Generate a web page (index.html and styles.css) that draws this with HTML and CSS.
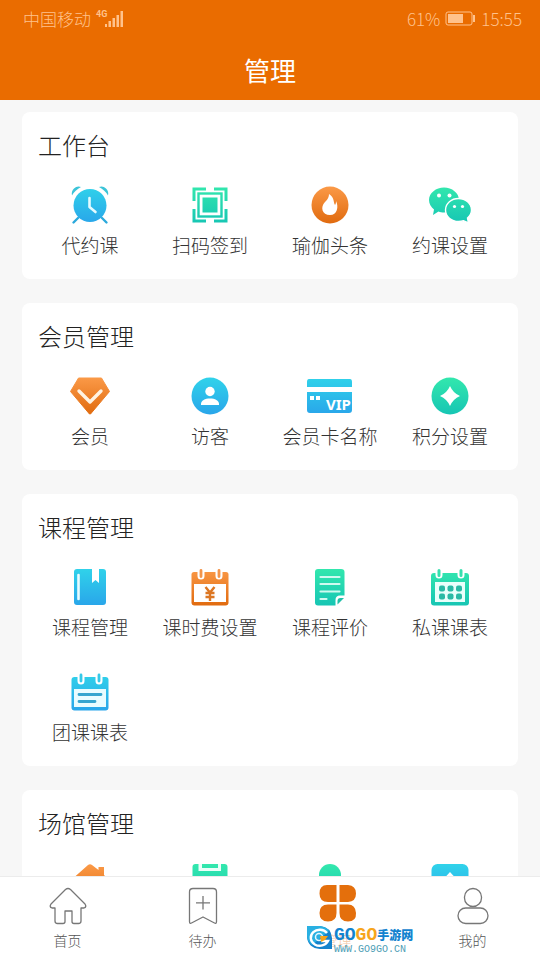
FILE: index.html
```html
<!DOCTYPE html>
<html lang="zh-CN">
<head>
<meta charset="utf-8">
<meta name="viewport" content="width=device-width, initial-scale=1">
<title>管理</title>
<link rel="stylesheet" href="styles.css">
</head>
<body>
<svg class="defs" aria-hidden="true">
  <defs>
    <linearGradient id="blue" gradientUnits="userSpaceOnUse" x1="0" y1="5" x2="0" y2="43"><stop offset="0" stop-color="#30d3ea"/><stop offset="1" stop-color="#29a5ea"/></linearGradient>
    <linearGradient id="green" gradientUnits="userSpaceOnUse" x1="0" y1="5" x2="0" y2="43"><stop offset="0" stop-color="#33e8ad"/><stop offset="1" stop-color="#16c5b4"/></linearGradient>
    <linearGradient id="orange" gradientUnits="userSpaceOnUse" x1="0" y1="5" x2="0" y2="43"><stop offset="0" stop-color="#fb9a48"/><stop offset="1" stop-color="#e06a0e"/></linearGradient>
  </defs>
</svg>

<header class="header">
  <div class="status">
    <div class="status-group">
      <span>中国移动</span>
      <span class="network">4G</span>
      <svg class="signal" viewBox="0 0 18 17" aria-hidden="true"><path d="M0 14h2v3H0zM3.500 11h2.500v6H3.500zM7.500 8H10v9H7.500zM11.500 5H14v12h-2.500zM15.500 1H18v16h-2.500z"/></svg>
    </div>
    <div class="status-group">
      <span>61%</span>
      <svg class="battery" viewBox="0 0 31 15" aria-hidden="true"><rect x="1" y="1" width="26" height="13" rx="2" fill="none" stroke="currentColor"/><rect x="3" y="3" width="15" height="9" fill="currentColor"/><path d="M28 4h2v7h-2z" fill="currentColor"/></svg>
      <span>15:55</span>
    </div>
  </div>
  <h1 class="title">管理</h1>
</header>

<main class="content">
  <section class="card">
    <h2 class="card-title">工作台</h2>
    <div class="grid">
      <button class="item" type="button">
        <svg class="icon" viewBox="0 0 48 48" aria-hidden="true"><circle cx="24" cy="24.500" r="16.500" fill="url(#blue)"/><path d="M6 14.500q-1-4 2-7t7-1.500q-6 3-9 8.500zM42 14.500q1-4-2-7t-7-1.500q6 3 9 8.500z" fill="#3cc4d8"/><path d="M12 37l-4.500 4.500M36 37l4.500 4.500" stroke="#2ba9dc" stroke-width="2.400" stroke-linecap="round"/><path d="M23.500 17v9l6 5" fill="none" stroke="#e4fbff" stroke-width="2.600" stroke-linecap="round" stroke-linejoin="round"/></svg>
        <span class="label">代约课</span>
      </button>
      <button class="item" type="button">
        <svg class="icon" viewBox="0 0 48 48" aria-hidden="true"><g fill="none" stroke="url(#green)" stroke-width="3"><path d="M20 8H8v12M28 8h12v12M8 28v12h12M40 28v12H28"/><rect x="12.500" y="12.500" width="23" height="23" stroke-width="2.400"/></g><rect x="16.500" y="16.500" width="15" height="15" fill="url(#green)"/></svg>
        <span class="label">扫码签到</span>
      </button>
      <button class="item" type="button">
        <svg class="icon" viewBox="0 0 48 48" aria-hidden="true"><circle cx="24" cy="24" r="18.500" fill="url(#orange)"/><path d="M23 13c6 4 4 8 6 11 1-1 1-3 1-4 3 6 1 14-6 14-8 0-10-8-5-13 3-3 4-5 4-8z" fill="#fff"/></svg>
        <span class="label">瑜伽头条</span>
      </button>
      <button class="item" type="button">
        <svg class="icon" viewBox="0 0 48 48" aria-hidden="true"><path d="M18 6.500c8 0 15 5.500 15 12.500s-7 12.500-15 12.500c-2 0-4-.3-5.500-1L7 34l1-5.500C5 26 3 23 3 19 3 12 10 6.500 18 6.500z" fill="url(#green)"/><circle cx="13" cy="14.500" r="2" fill="#fff"/><circle cx="23.500" cy="14.500" r="2" fill="#fff"/><path d="M32.500 17.500c7 0 13 5 13 11.500 0 3-1.500 6-4 8l1 5-5-2.300c-1.500.6-3 .8-5 .8-7 0-13-5-13-11.500s6-11.500 13-11.500z" fill="url(#green)" stroke="#fff" stroke-width="1.400"/><circle cx="28.500" cy="25.500" r="1.600" fill="#fff"/><circle cx="36.500" cy="25.500" r="1.600" fill="#fff"/></svg>
        <span class="label">约课设置</span>
      </button>
    </div>
  </section>

  <section class="card">
    <h2 class="card-title">会员管理</h2>
    <div class="grid">
      <button class="item" type="button">
        <svg class="icon" viewBox="0 0 48 48" aria-hidden="true"><path d="M12.500 6h23L43.500 19.500 24.500 42h-1L4.500 19.500z" fill="url(#orange)" stroke="url(#orange)" stroke-linejoin="round"/><path d="M13 19l11 11 11-11" fill="none" stroke="#fff3e2" stroke-width="3.400" stroke-linecap="round" stroke-linejoin="round"/></svg>
        <span class="label">会员</span>
      </button>
      <button class="item" type="button">
        <svg class="icon" viewBox="0 0 48 48" aria-hidden="true"><circle cx="24" cy="24" r="18.500" fill="url(#blue)"/><circle cx="24" cy="19.500" r="4.700" fill="#fff"/><path d="M15 32c0-3.500 4-5.500 9-5.500s9 2 9 5.500v1H15z" fill="#fff"/></svg>
        <span class="label">访客</span>
      </button>
      <button class="item" type="button">
        <svg class="icon" viewBox="0 0 48 48" aria-hidden="true"><path d="M3 7h41q2 0 2 3v5H1v-5q0-3 2-3zM1 20h45v18q0 3-3 3H4q-3 0-3-3z" fill="url(#blue)"/><path d="M4 24h4v4H4zM10 24h4v4h-4z" fill="#fff"/><text class="vip" x="20" y="38">VIP</text></svg>
        <span class="label">会员卡名称</span>
      </button>
      <button class="item" type="button">
        <svg class="icon" viewBox="0 0 48 48" aria-hidden="true"><circle cx="24" cy="24" r="18.500" fill="url(#green)"/><path d="M24 14q3 7 10 10-7 3-10 10-3-7-10-10 7-3 10-10z" fill="#fff"/></svg>
        <span class="label">积分设置</span>
      </button>
    </div>
  </section>

  <section class="card">
    <h2 class="card-title">课程管理</h2>
    <div class="grid">
      <button class="item" type="button">
        <svg class="icon" viewBox="0 0 48 48" aria-hidden="true"><path d="M11 6h15v14l3.500-3 3.500 3V6h4q3 0 3 3v30q0 3-3 3H11q-3 0-3-3V9q0-3 3-3z" fill="url(#blue)"/><path d="M12.500 12v24" stroke="#e9fcff" stroke-width="2.600" stroke-linecap="round"/></svg>
        <span class="label">课程管理</span>
      </button>
      <button class="item" type="button">
        <svg class="icon" viewBox="0 0 48 48" aria-hidden="true"><path d="M8 9h32q2.500 0 2.500 2.500v28q0 3-3 3h-31q-3 0-3-3v-28Q5.500 9 8 9z" fill="url(#orange)"/><path d="M8 21h32v18H8z" fill="#fff"/><path d="M11.500 8v5a3.500 3.500 0 0 0 7 0V8zM29.500 8v5a3.500 3.500 0 0 0 7 0V8z" fill="#fff"/><path d="M15 7.500v6M33 7.500v6" stroke="#f3954b" stroke-width="2.800" stroke-linecap="round"/><path d="M19.500 24l4.500 5.500 4.500-5.500M24 29.500V38M19.500 30h9M19.500 34h9" fill="none" stroke="#dc7622" stroke-width="2.400"/></svg>
        <span class="label">课时费设置</span>
      </button>
      <button class="item" type="button">
        <svg class="icon" viewBox="0 0 48 48" aria-hidden="true"><path d="M12 6h23q3.500 0 3.500 3v23.500H34q-4.500 0-4.500 4.500v5.500H12q-3 0-3-3V9q0-3 3-3z" fill="url(#green)"/><path d="M38 35l-6.500 6.500V38q0-3 3-3z" fill="#1fc0a8"/><path d="M14.500 14h19M14.500 21h19M14.500 28.500h19M14.500 36h6" stroke="#cffaf0" stroke-width="2.200" stroke-linecap="round"/></svg>
        <span class="label">课程评价</span>
      </button>
      <button class="item" type="button">
        <svg class="icon" viewBox="0 0 48 48" aria-hidden="true"><rect x="5" y="10" width="38" height="32.500" rx="3" fill="url(#green)"/><path d="M9 19h30v20H9z" fill="#e9fffb"/><path d="M9.500 9v3a3.500 3.500 0 0 0 7 0V9zM31.500 9v3a3.500 3.500 0 0 0 7 0V9z" fill="#fff"/><path d="M13 7.500v5M35 7.500v5" stroke="#36dfae" stroke-width="3" stroke-linecap="round"/><g fill="#2abaa5"><rect x="13" y="22.500" width="6" height="6" rx="2"/><rect x="21.500" y="22.500" width="6" height="6" rx="2"/><rect x="30" y="22.500" width="6" height="6" rx="2"/><rect x="13" y="30.500" width="6" height="6" rx="2"/><rect x="21.500" y="30.500" width="6" height="6" rx="2"/><rect x="30" y="30.500" width="6" height="6" rx="2"/></g></svg>
        <span class="label">私课课表</span>
      </button>
      <button class="item" type="button">
        <svg class="icon" viewBox="0 0 48 48" aria-hidden="true"><rect x="5.500" y="9" width="37" height="33.500" rx="3" fill="url(#blue)"/><path d="M8 21h32v18H8z" fill="#e9fcff"/><path d="M11.500 8v5a3.500 3.500 0 0 0 7 0V8zM29.500 8v5a3.500 3.500 0 0 0 7 0V8z" fill="#fff"/><path d="M15 7v6M33 7v6" stroke="#35c9e8" stroke-width="2.800" stroke-linecap="round"/><path d="M13 26.500h22M13 33.500h16" stroke="#36a5cf" stroke-width="2.800" stroke-linecap="round"/></svg>
        <span class="label">团课课表</span>
      </button>
    </div>
  </section>

  <section class="card">
    <h2 class="card-title">场馆管理</h2>
    <div class="grid">
      <button class="item" type="button">
        <svg class="icon" viewBox="0 0 48 48" aria-hidden="true"><path d="M22 6q2-1.500 4 0l6.500 5V8h5.500v8l6 6h-4v20H8V22H4z" fill="url(#orange)"/></svg>
      </button>
      <button class="item" type="button">
        <svg class="icon" viewBox="0 0 48 48" aria-hidden="true"><rect x="6.500" y="5" width="35" height="38" rx="3" fill="url(#green)"/><path d="M12.500 5h22.500v7h-22.500z" fill="#eafff9"/><path d="M16 5h16v4H16z" fill="url(#green)"/></svg>
      </button>
      <button class="item" type="button">
        <svg class="icon" viewBox="0 0 48 48" aria-hidden="true"><circle cx="24" cy="16" r="11" fill="url(#green)"/><path d="M6 43c0-9 8-14 18-14s18 5 18 14z" fill="url(#green)"/></svg>
      </button>
      <button class="item" type="button">
        <svg class="icon" viewBox="0 0 48 48" aria-hidden="true"><rect x="5.500" y="5" width="37" height="38" rx="6" fill="url(#blue)"/><path d="M24 13l11 12h-7v10h-8V25h-7z" fill="#fff"/></svg>
      </button>
    </div>
  </section>
</main>

<nav class="tabs">
  <a class="tab" href="#home">
    <svg class="tab-icon" viewBox="0 0 40 40" aria-hidden="true"><path d="M17.500 4.500q2.500-2 5 0L37 19q2 3-1 4h-3v13q0 2.500-2.500 2.500H26q-2 0-2-2V26h-7v10.500q0 2-2 2H9.500Q7 38.500 7 36V23H4q-3-1-1-4z"/></svg>
    <span>首页</span>
  </a>
  <a class="tab" href="#todo">
    <svg class="tab-icon" viewBox="0 0 40 40" aria-hidden="true"><path d="M10 3.500h20q3.500 0 3.500 3.500v29.500q0 2.500-2 1.500L20 32 8.500 38q-2 1-2-1.500V7q0-3.500 3.500-3.500zM20 11v13.500M13 17.800h14"/></svg>
    <span>待办</span>
  </a>
  <a class="tab active" href="#manage" aria-current="page">
    <svg class="tab-icon" viewBox="0 0 40 40" aria-hidden="true"><path d="M9 0h9.500v17H10q-8.500 0-8.500-8.500T9 0zM30 0h-8.500v17H30q8-.500 8-8.500T30 0zM10 19.500h8.500V28q0 8.500-8.500 8.500T1.500 28t8.500-8.500zM30 19.500h-8.500V28q0 8.500 8.500 8.500t8-8.500-8-8.500z"/></svg>
    <span>管理</span>
    <span class="mark">
      <svg class="mark-logo" viewBox="0 0 26 26" aria-hidden="true"><path d="M0 1h13q11 1 12 12v11H13Q1 23 0 12z" fill="#1583cc"/><path d="M0 1h13q7 1 9 5L5 20Q0 16 0 11z" fill="#29b0e2"/><path d="M20 8a9 8 0 1 0 1 8h-7" fill="none" stroke="#fff" stroke-width="2.400"/><circle cx="12" cy="12" r="3.500" fill="none" stroke="#e2f7ff" stroke-width="1.500"/><path d="M13 11h8l-3 4-4 2z" fill="#f6a31a"/></svg>
      <span class="mark-words">
        <span class="mark-name"><b class="go-blue">GO</b><b class="go-gold">GO</b><b class="mark-cn">手游网</b></span>
        <span class="mark-url">WWW.GO9GO.CN</span>
      </span>
    </span>
  </a>
  <a class="tab" href="#me">
    <svg class="tab-icon" viewBox="0 0 40 40" aria-hidden="true"><rect x="11.500" y="3.500" width="17" height="18" rx="8.500"/><rect x="5" y="23" width="30" height="15.500" rx="7.700"/></svg>
    <span>我的</span>
  </a>
</nav>
</body>
</html>
```

FILE: styles.css
```css
* {
  box-sizing: border-box;
}

body {
  margin: 0;
  height: 100vh;
  display: flex;
  flex-direction: column;
  background: #f7f7f7;
  color: #222;
  font-family: "Noto Sans CJK SC", sans-serif;
  font-weight: 300;
}

.defs {
  position: absolute;
  width: 0;
  height: 0;
}

.header {
  flex: none;
  background: #ea6c00;
  color: #fff;
}

.status {
  display: flex;
  justify-content: space-between;
  padding: 0 18px 0 23px;
  height: 36px;
  color: #ffc28c;
  font-size: 17px;
}

.status-group {
  display: flex;
  align-items: center;
  gap: 5px;
}

.network {
  align-self: flex-start;
  padding-top: 8px;
  font-family: Roboto, sans-serif;
  font-size: 9px;
  font-weight: 700;
  line-height: 12px;
}

.signal {
  width: 18px;
  height: 17px;
  margin-left: -7px;
  fill: currentColor;
}

.battery {
  width: 31px;
  height: 15px;
}

.title {
  margin: 0;
  padding-top: 4px;
  font-size: 26px;
  font-weight: 400;
  line-height: 60px;
  text-align: center;
}

.content {
  flex: 1;
  min-height: 0;
  overflow-y: auto;
  scrollbar-width: none;
  padding: 12px 22px;
  display: flex;
  flex-direction: column;
  gap: 24px;
}

.card {
  flex: none;
  padding: 16px 8px;
  border-radius: 8px;
  background: #fff;
}

.card-title {
  margin: 0 8px 19px;
  font-size: 24px;
  font-weight: 300;
  line-height: 34px;
}

.grid {
  display: grid;
  grid-template-columns: repeat(4, 1fr);
  row-gap: 23px;
}

.item {
  display: flex;
  flex-direction: column;
  align-items: center;
  padding: 0 0 2px;
  border: 0;
  background: none;
  color: #333;
  font: inherit;
  font-size: 19px;
}

.icon {
  width: 48px;
  height: 48px;
}

.label {
  line-height: 32px;
  white-space: nowrap;
}

.vip {
  fill: #fff;
  font-family: "Noto Sans", sans-serif;
  font-size: 15px;
  font-weight: 700;
}

.tabs {
  flex: none;
  display: grid;
  grid-template-columns: repeat(4, 1fr);
  height: 84px;
  border-top: 1px solid #ececec;
  background: #fff;
}

.tab {
  position: relative;
  display: flex;
  flex-direction: column;
  align-items: center;
  padding-top: 8px;
  color: #555;
  font-size: 14px;
  line-height: 30px;
  text-decoration: none;
}

.tab-icon {
  width: 40px;
  height: 40px;
  fill: none;
  stroke: #777;
  stroke-width: 1.3;
  stroke-linejoin: round;
}

.active {
  color: #f3c9a5;
}

.active .tab-icon {
  fill: #e46f0c;
  stroke: none;
}

.mark {
  position: absolute;
  top: 48px;
  left: 37px;
  display: flex;
  gap: 1px;
  white-space: nowrap;
}

.mark-logo {
  width: 26px;
  height: 26px;
}

.mark-words {
  display: flex;
  flex-direction: column;
}

.mark-name {
  display: flex;
  font-family: "Liberation Mono", monospace;
  font-size: 18px;
  line-height: 20px;
}

.mark-name b {
  font-weight: 700;
}

.go-blue {
  color: #1283cf;
}

.go-gold {
  color: #f7a51c;
}

.mark-name .mark-cn {
  color: #1283cf;
  font-family: "Noto Sans CJK SC", sans-serif;
  font-size: 12px;
  font-weight: 900;
}

.mark-url {
  color: #4d9db5;
  font-family: "Liberation Mono", monospace;
  font-size: 10px;
  line-height: 10px;
}
```
